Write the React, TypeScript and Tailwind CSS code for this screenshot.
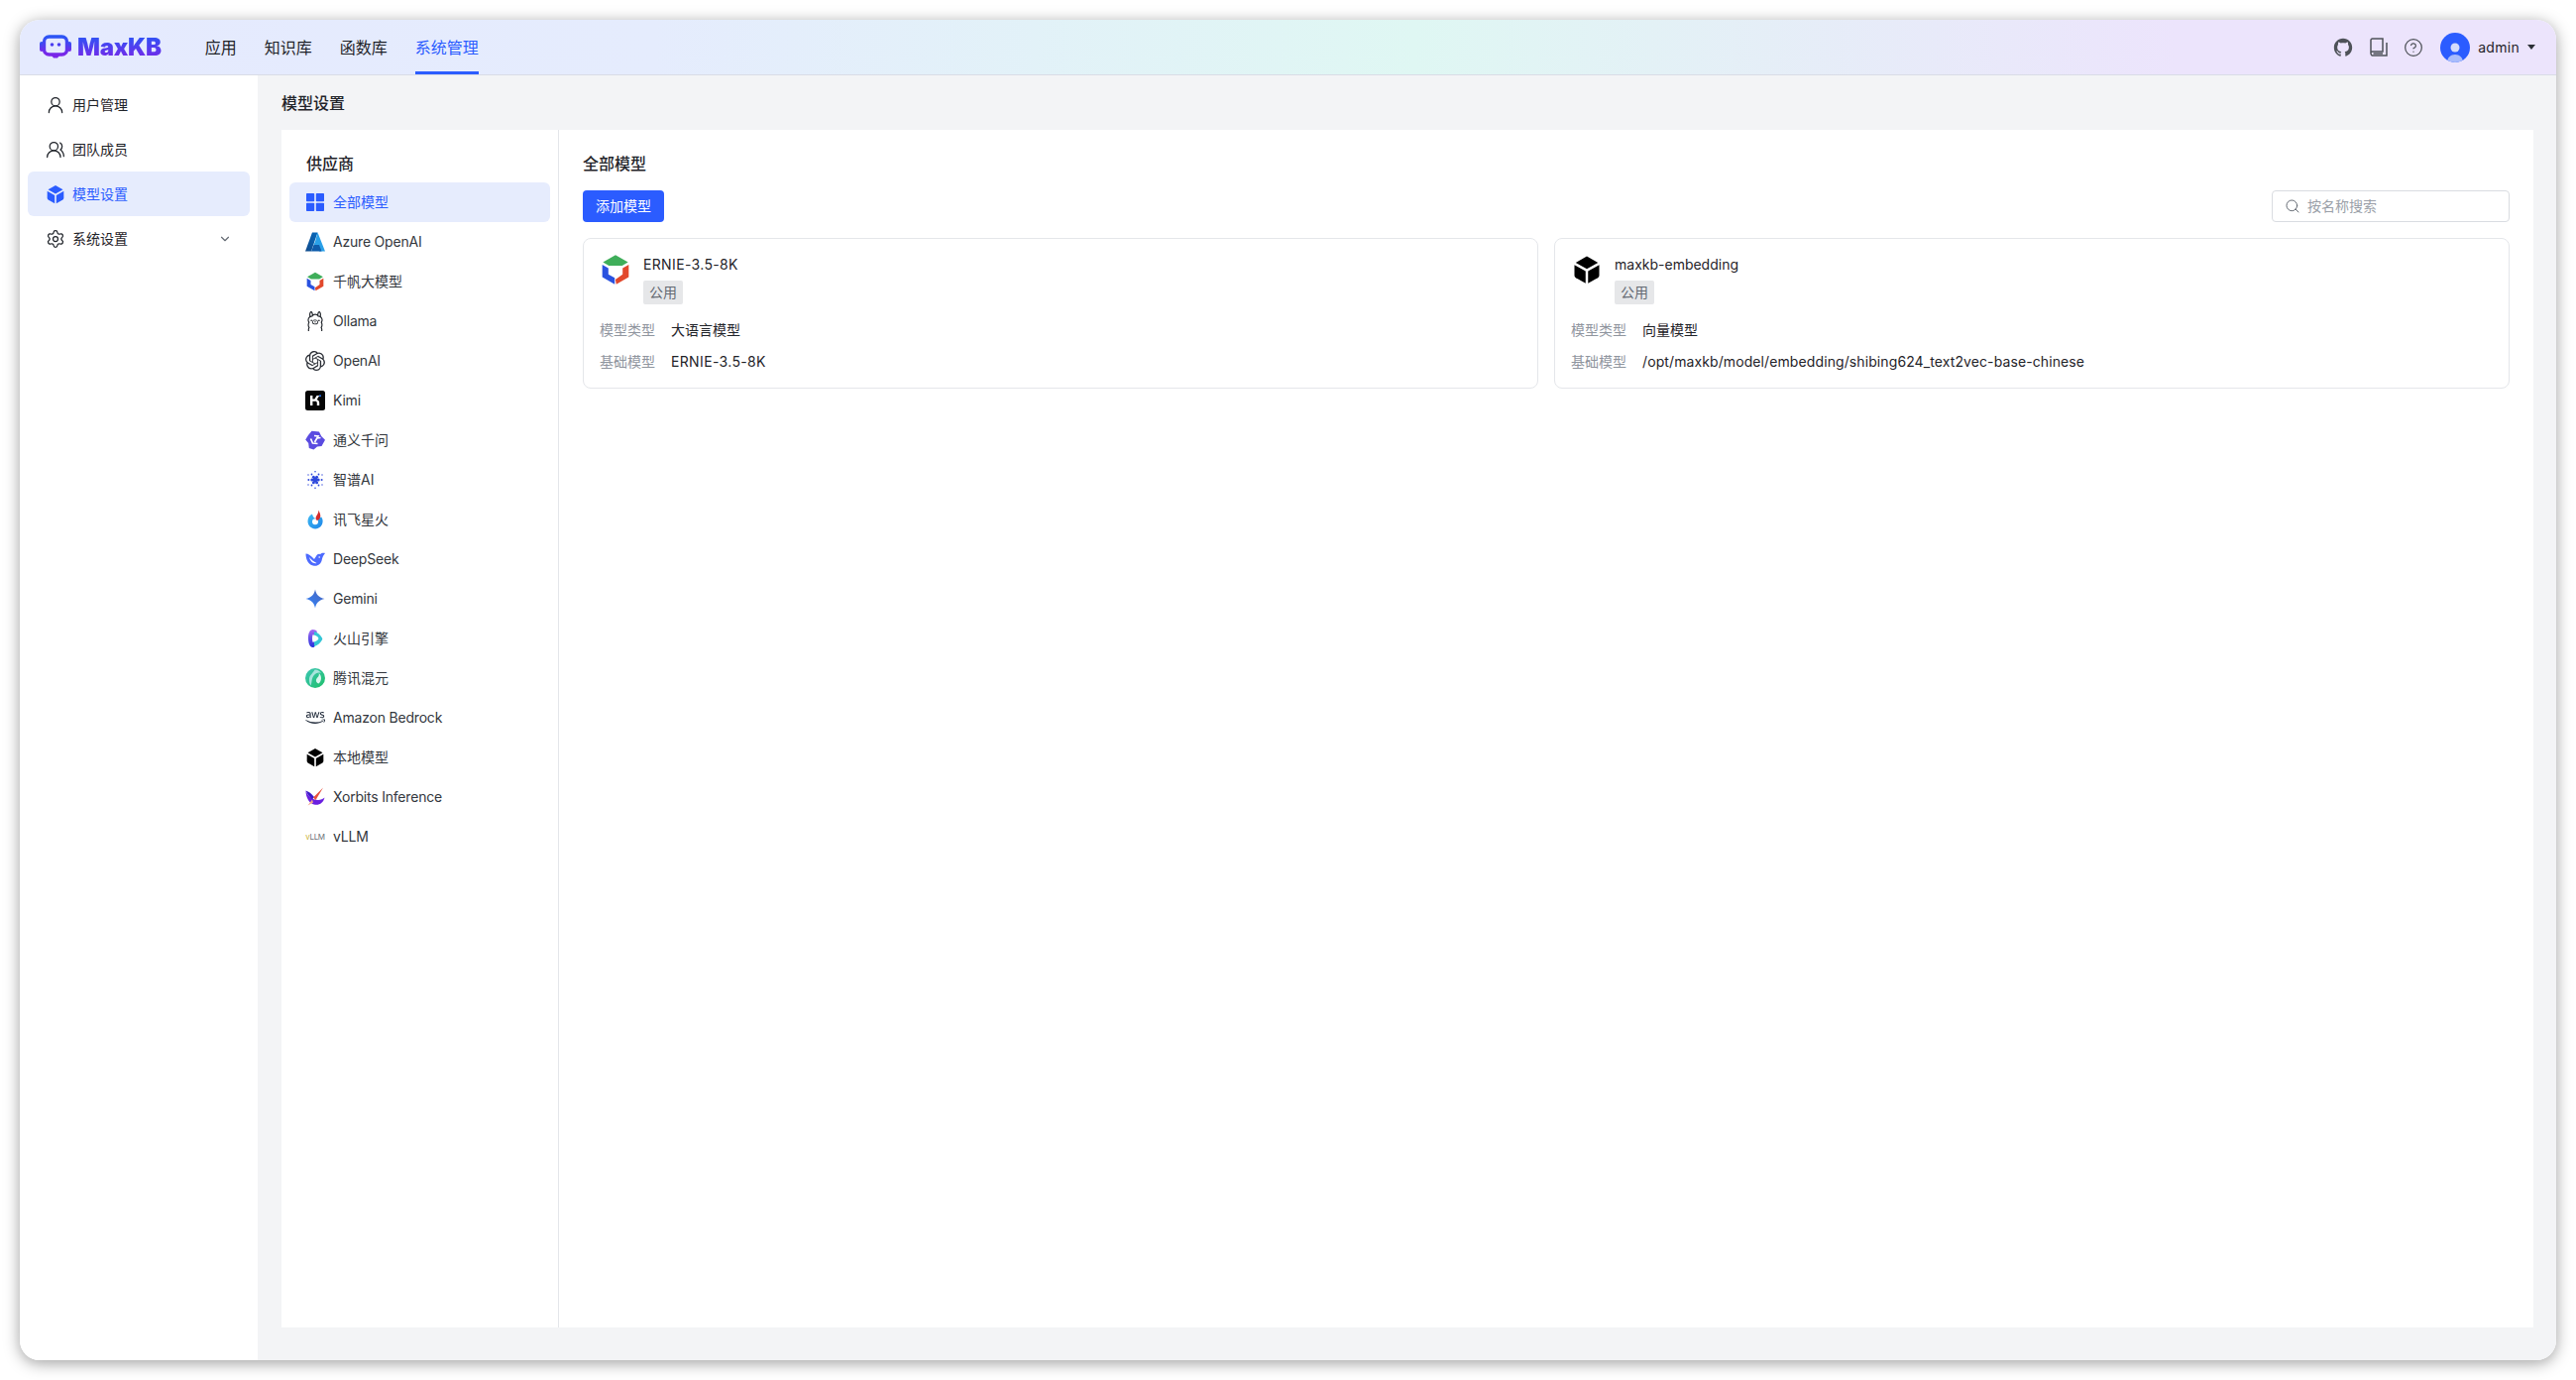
import type { ReactNode } from 'react'
import { ChevronDown, CircleHelp, Search, Settings, UserRound, UsersRound } from 'lucide-react'
import { FaAws } from 'react-icons/fa'
import { RiGithubFill } from 'react-icons/ri'
import { SiOllama, SiOpenai } from 'react-icons/si'

const FONT = 'font-[Inter,"Noto_Sans_CJK_SC",sans-serif]'

function LogoIcon() {
  return (
    <svg width="32" height="26" viewBox="0 0 32 26">
      <defs>
        <linearGradient id="logo" x1="0" y1="0" x2="0" y2="1">
          <stop offset="0" stopColor="#2b55f5" />
          <stop offset="1" stopColor="#7a26e8" />
        </linearGradient>
      </defs>
      <rect x="0" y="7" width="4" height="10" rx="2" fill="url(#logo)" />
      <rect x="28" y="7" width="4" height="10" rx="2" fill="url(#logo)" />
      <rect x="4.5" y="2" width="23" height="18" rx="5" fill="none" stroke="url(#logo)" strokeWidth="3.4" />
      <circle cx="12.5" cy="10" r="1.8" fill="#4a3df0" />
      <circle cx="19.5" cy="10" r="1.8" fill="#4a3df0" />
      <path d="M12 21h8l-2 2.500h-4z" fill="#7a26e8" />
    </svg>
  )
}

function Cube({ size = 20, color = '#000' }: { size?: number; color?: string }) {
  return (
    <svg width={size} height={size} viewBox="0 0 24 24" fill={color}>
      <path d="M12 1.200 21 6.300 12 11.300 3 6.300Z" />
      <path d="M2 8.200 11 13.200V23L3.200 18.600C2.500 18.200 2 17.500 2 16.600Z" />
      <path d="M22 8.200 13 13.200V23L20.800 18.600C21.500 18.200 22 17.500 22 16.600Z" />
    </svg>
  )
}

function Qianfan({ size = 20 }: { size?: number }) {
  return (
    <svg width={size} height={size} viewBox="0 0 24 24">
      <path d="M12 1 21.500 6.400 17 9H7L2.500 6.400Z" fill="#3fae5a" />
      <path d="M2 8.200 6.600 10.900V15.600L11.400 18.200V23L2 17.600Z" fill="#2a52e0" />
      <path d="M22 8.200V17.600L12.600 23 11.900 19.500 17.400 15.600V10.900Z" fill="#e2482c" />
    </svg>
  )
}

function GridIcon() {
  return (
    <svg width="20" height="20" viewBox="0 0 20 20" fill="#2b5cff">
      <rect x="1" y="1" width="8.200" height="8.200" rx="0.800" />
      <rect x="10.800" y="1" width="8.200" height="8.200" rx="0.800" />
      <rect x="1" y="10.800" width="8.200" height="8.200" rx="0.800" />
      <rect x="10.800" y="10.800" width="8.200" height="8.200" rx="0.800" />
    </svg>
  )
}

function Azure() {
  return (
    <svg width="20" height="20" viewBox="0 0 20 20">
      <defs>
        <linearGradient id="az" x1="0" y1="1" x2="1" y2="0">
          <stop offset="0" stopColor="#114a8b" />
          <stop offset="1" stopColor="#0669bc" />
        </linearGradient>
      </defs>
      <path d="M7 .5h5.500L6 19.500H0Z" fill="url(#az)" />
      <path d="M12.500 .5 20 19.500H14L11.500 13H8.500L10 9.500Z" fill="#2aa0e8" />
      <path d="M8.500 13h5.500l2.500 6.500H6Z" fill="#0f5cab" />
    </svg>
  )
}

function Kimi() {
  return (
    <svg width="20" height="20" viewBox="0 0 20 20">
      <rect width="20" height="20" rx="2.500" fill="#050505" />
      <path d="M5 5h2.400v3.600h2L11.600 5h2.600l-2.600 4.200c1.600.3 2.600 1.400 2.600 3V15h-2.400v-2.600c0-1-.6-1.600-1.600-1.600H7.400V15H5Z" fill="#fff" />
      <circle cx="15" cy="5.200" r="1" fill="#2b7bff" />
    </svg>
  )
}

function Tongyi() {
  return (
    <svg width="20" height="20" viewBox="0 0 20 20">
      <path d="M6.500 .8 14 1.500 16.200 6 20 9.800 16.500 16 12 16.500 8.500 19.500 3.800 18 3.200 13 .2 9.500 3 5Z" fill="#5a4be0" />
      <path d="M9 5.500 13 6l-3.500 6M5.500 8.500 7.500 13l5 .500M15.500 7.500l-3.500.5" fill="none" stroke="#fff" strokeWidth="1.700" />
    </svg>
  )
}

function Zhipu() {
  const dots: [number, number, number][] = [
    [10, 10, 2.400], [6.800, 10, 1.500], [13.200, 10, 1.500], [8.400, 7.200, 1.500], [11.600, 7.200, 1.500], [8.400, 12.800, 1.500], [11.600, 12.800, 1.500],
    [3.400, 10, 1], [16.600, 10, 1], [6.500, 4.500, 0.900], [13.500, 4.500, 0.900], [6.500, 15.500, 0.900], [13.500, 15.500, 0.900],
    [10, 1.800, 0.800], [10, 18.200, 0.800], [3, 5, 0.700], [17, 5, 0.700], [3, 15, 0.700], [17, 15, 0.700],
  ]
  return (
    <svg width="20" height="20" viewBox="0 0 20 20" fill="#2f49dc">
      {dots.map(([cx, cy, r]) => (
        <circle key={`${cx}-${cy}`} cx={cx} cy={cy} r={r} />
      ))}
    </svg>
  )
}

function Spark() {
  return (
    <svg width="20" height="20" viewBox="0 0 20 20">
      <defs>
        <linearGradient id="spk" x1="0" y1="0" x2="1" y2="1">
          <stop offset="0" stopColor="#3db8f2" />
          <stop offset="1" stopColor="#1f86e8" />
        </linearGradient>
      </defs>
      <path d="M7 4.500C4 6 2.500 8.500 2.500 11.800c0 4.200 3.400 7.600 7.600 7.600s7.500-3.400 7.500-7.600c0-1.600-.5-3-1.400-4.200l-5 1.900C9 9 7.500 7 7 4.500Z" fill="url(#spk)" />
      <circle cx="10" cy="12.200" r="3" fill="#fff" />
      <path d="M13.500 .5c.8 2.500 1.800 3.800 1.800 6 0 2.300-1.500 4-3.600 4.600-1.500-1.600-1.400-3.500-.2-5C12.600 4.500 13.400 2.800 13.500 .5Z" fill="#d62b2b" />
    </svg>
  )
}

function DeepSeek() {
  return (
    <svg width="20" height="20" viewBox="0 0 20 20">
      <path d="M.5 4.500C3 4.500 6 6.500 9 10L11 7C12 5.200 13.800 4.300 15 5.200 16.200 4 18.200 3.500 20 4c-1.500 2-2.700 4-3.200 6.500-.8 4.300-4 6.800-8 6.200C3.500 16 .5 11 .5 4.500Z" fill="#4d6bfe" />
      <path d="M4 8c2 2.500 4.500 4.500 7.500 6-3.500 1-6.500-2-7.500-6Z" fill="#fff" />
      <circle cx="14.200" cy="8" r="0.800" fill="#fff" />
    </svg>
  )
}

function Gemini() {
  return (
    <svg width="20" height="20" viewBox="0 0 20 20">
      <defs>
        <linearGradient id="gem" x1="0" y1="1" x2="1" y2="0">
          <stop offset="0" stopColor="#3186ff" />
          <stop offset="1" stopColor="#4a62b8" />
        </linearGradient>
      </defs>
      <path d="M10 .5c.8 5 3.900 8.500 9.500 9.500-5.600 1-8.700 4.500-9.500 9.500C9.200 14.500 6.100 11 .5 10 6.100 9 9.200 5.500 10 .5Z" fill="url(#gem)" />
    </svg>
  )
}

function Volcano() {
  return (
    <svg width="20" height="20" viewBox="0 0 20 20">
      <defs>
        <linearGradient id="vol" x1="0" y1="0" x2="0" y2="1">
          <stop offset="0" stopColor="#a66cf2" />
          <stop offset="1" stopColor="#2430dc" />
        </linearGradient>
      </defs>
      <path d="M7.500 1C4.800 1 3 4.500 3 9.500 3 15 4.800 19 7.500 19c1.300 0 2-.6 2.500-1.500L8 10l4-7C11 1.800 9.500 1 7.500 1Z" fill="url(#vol)" />
      <path d="M9 3c3.500 1 6.500 3.800 8 6.500.4.800.4 1.300 0 2-1.500 3-4.500 5.300-8 6.500Z" fill="#35c6d6" />
      <path d="M7.500 6.300c2.700.3 5.300 1.800 6 3.700-.7 2-3.300 3.500-6 3.700-.6-2.500-.6-5 0-7.400Z" fill="#fff" />
    </svg>
  )
}

function Hunyuan() {
  return (
    <svg width="20" height="20" viewBox="0 0 20 20">
      <defs>
        <linearGradient id="hy" x1="0" y1="0" x2="1" y2="1">
          <stop offset="0" stopColor="#3cc6b4" />
          <stop offset="1" stopColor="#1fbf6a" />
        </linearGradient>
      </defs>
      <circle cx="10" cy="10" r="10" fill="url(#hy)" />
      <path d="M5.500 17.500C7 14 6 11 8.500 7.500 10.500 4.800 13.500 4 16 5c-1.500-2.500-4-3.800-6.500-3.500C8.500 4.500 4.500 6.500 4 10.500c-.3 2.700.3 5 1.500 7Z" fill="#a8e4dd" />
      <path d="M13.500 5c1.500 3-2 4.500-2.500 6.500-.5 2 .7 3.500 2.500 4 3.200-2.500 3.500-8-.000-10.500Z" fill="#d9f6ef" />
    </svg>
  )
}

function Xorbits() {
  return (
    <svg width="20" height="20" viewBox="0 0 20 20">
      <path d="M.5 3.500c2 5.500 6.500 9.500 12.500 9.500 2.500 0 4.800-1 6.500-2.500-1 5-5 7.800-9.500 7.200C4.500 17 .5 11 .5 3.500Z" fill="#6a1fe0" />
      <path d="M.5 3.500c3 1 6 3 8.500 6.500l-2 2.500C4.500 10 2 7 .5 3.500Z" fill="#3a18c8" />
      <path d="M18 .5 8 10.500l2.500 2.500Z" fill="#e8503c" />
      <path d="M7 12.500 2.500 18.500l5.500-3Z" fill="#f3a58c" />
    </svg>
  )
}

function Vllm() {
  return (
    <span className="flex w-5 justify-center text-[8px] leading-none tracking-[-0.3px] text-[#6b7077]">
      <span className="text-[#c9b13c]">v</span>LLM
    </span>
  )
}

const providers: { name: string; icon: ReactNode; latin?: boolean }[] = [
  { name: '全部模型', icon: <GridIcon /> },
  { name: 'Azure OpenAI', icon: <Azure />, latin: true },
  { name: '千帆大模型', icon: <Qianfan /> },
  { name: 'Ollama', icon: <SiOllama size={20} color="#1f2329" />, latin: true },
  { name: 'OpenAI', icon: <SiOpenai size={20} color="#2b2f36" />, latin: true },
  { name: 'Kimi', icon: <Kimi />, latin: true },
  { name: '通义千问', icon: <Tongyi /> },
  { name: '智谱AI', icon: <Zhipu /> },
  { name: '讯飞星火', icon: <Spark /> },
  { name: 'DeepSeek', icon: <DeepSeek />, latin: true },
  { name: 'Gemini', icon: <Gemini />, latin: true },
  { name: '火山引擎', icon: <Volcano /> },
  { name: '腾讯混元', icon: <Hunyuan /> },
  { name: 'Amazon Bedrock', icon: <FaAws size={20} color="#252f3e" />, latin: true },
  { name: '本地模型', icon: <Cube /> },
  { name: 'Xorbits Inference', icon: <Xorbits />, latin: true },
  { name: 'vLLM', icon: <Vllm />, latin: true },
]

const sideItems = [
  { name: '用户管理', icon: <UserRound size={20} strokeWidth={1.5} /> },
  { name: '团队成员', icon: <UsersRound size={20} strokeWidth={1.5} /> },
  { name: '模型设置', icon: <Cube color="#2b5cff" />, active: true },
  { name: '系统设置', icon: <Settings size={20} strokeWidth={1.5} />, arrow: true },
]

interface ModelCardProps {
  icon: ReactNode
  name: string
  type: string
  base: string
  nameClass?: string
  baseClass?: string
}

function ModelCard({ icon, name, type, base, nameClass = '', baseClass = '' }: ModelCardProps) {
  return (
    <div className="h-[152px] rounded-lg border border-[#e4e6ea] bg-white px-4 pt-[15px]">
      <div className="flex">
        <div className="flex h-8 w-8 items-center justify-center">{icon}</div>
        <div className="ml-3">
          <div className={`text-sm leading-[22px] text-[#1f2329] ${nameClass}`}>{name}</div>
          <span className="mt-[5px] block h-6 w-10 rounded-[2px] bg-[#e6e7e9] text-center text-sm leading-6 text-[#646a73]">公用</span>
        </div>
      </div>
      <div className="mt-[15px] flex h-[22px] items-center text-sm">
        <span className="w-[72px] text-[#8f959e]">模型类型</span>
        <span className="text-[#1f2329]">{type}</span>
      </div>
      <div className="mt-[10px] flex h-[22px] items-center text-sm">
        <span className="w-[72px] text-[#8f959e]">基础模型</span>
        <span className={`text-[#1f2329] ${baseClass}`}>{base}</span>
      </div>
    </div>
  )
}

export default function App() {
  return (
    <div className={`${FONT} h-[1392px] bg-white p-5 antialiased`}>
      <div className="flex h-full flex-col overflow-hidden rounded-[20px] bg-white shadow-[0_3px_16px_rgba(0,0,0,0.38)]">
        {/* Header */}
        <header className="flex h-[56px] shrink-0 items-center border-b border-[#d9dce6] bg-[linear-gradient(90deg,#e5eafe_0%,#e5ecfd_25%,#dff7f3_55%,#ece4fc_85%,#ece4fc_100%)] pl-5 pr-[21px]">
          <LogoIcon />
          <span className="ml-[6px] bg-[linear-gradient(180deg,#2b55f5,#7a26e8)] bg-clip-text text-[24px] font-black leading-none tracking-[-0.3px] text-transparent">MaxKB</span>
          <nav className="ml-[44px] flex h-full gap-7 text-base text-[#1f2329]">
            <a className="flex items-center">应用</a>
            <a className="flex items-center">知识库</a>
            <a className="flex items-center">函数库</a>
            <a className="flex items-center border-b-[3px] border-[#2b5cff] pt-[3px] text-[#2b5cff]">系统管理</a>
          </nav>
          <div className="ml-auto flex items-center text-[#4e5258]">
            <RiGithubFill size={22} />
            <svg className="ml-[14px]" width="22" height="22" viewBox="0 0 22 22" fill="none" stroke="currentColor" strokeWidth="1.500">
              <path d="M3 17V3.500C3 2.700 3.700 2 4.500 2H15v13H4.500C3.700 15 3 15.700 3 16.500S3.700 19 4.500 19H19V6" />
              <path d="M5.500 17H15" />
            </svg>
            <CircleHelp className="ml-[14px]" size={20} strokeWidth={1.5} />
            <div className="ml-[17px] flex h-[30px] w-[30px] items-end justify-center overflow-hidden rounded-full bg-[#2b5cff]">
              <svg width="20" height="24" viewBox="0 0 20 24">
                <circle cx="10" cy="9" r="4.500" fill="#d4dcfb" />
                <path d="M2 24c0-5 3.500-8 8-8s8 3 8 8Z" fill="#a9bcfb" />
              </svg>
            </div>
            <span className="ml-2 text-sm tracking-[0.3px] text-[#1f2329]">admin</span>
            <span className="ml-2 h-0 w-0 border-x-[4px] border-t-[5px] border-x-transparent border-t-[#2b2f36]" />
          </div>
        </header>

        <div className="flex min-h-0 flex-1">
          {/* Sidebar */}
          <aside className="w-[240px] shrink-0 bg-white px-2 pt-[7px]">
            {sideItems.map((item) => (
              <div
                key={item.name}
                className={`flex h-[45px] items-center rounded-md pl-[18px] pr-[18px] text-sm ${item.active ? 'bg-[#e6ecfd] text-[#2b5cff]' : 'text-[#1f2329]'}`}
              >
                <span className="flex w-5 justify-center">{item.icon}</span>
                <span className="ml-[7px]">{item.name}</span>
                {item.arrow && <ChevronDown className="ml-auto text-[#646a73]" size={14} />}
              </div>
            ))}
          </aside>

          {/* Main */}
          <main className="flex min-w-0 flex-1 flex-col bg-[#f3f4f6] pb-[33px] pl-[24px] pr-[23px]">
            <h2 className="flex h-[55px] shrink-0 items-center text-base font-medium text-[#1f2329]">模型设置</h2>
            <div className="flex min-h-0 flex-1 bg-white">
              <div className="w-[280px] shrink-0 border-r border-[#e4e6ea] px-2 pt-6">
                <h3 className="pl-[17px] text-base font-medium leading-5 text-[#1f2329]">供应商</h3>
                <ul className="mt-[9px]">
                  {providers.map((p, i) => (
                    <li
                      key={p.name}
                      className={`flex h-10 items-center rounded-md pl-4 text-sm ${i === 0 ? 'bg-[#e6ecfd] text-[#2b5cff]' : 'text-[#33373d]'}`}
                    >
                      <span className="flex w-5 items-center justify-center">{p.icon}</span>
                      <span className={p.latin ? 'ml-2 tracking-[-0.2px]' : 'ml-2'}>{p.name}</span>
                    </li>
                  ))}
                </ul>
              </div>

              <div className="min-w-0 flex-1 px-6 pt-6">
                <h3 className="text-base font-medium leading-5 text-[#1f2329]">全部模型</h3>
                <div className="mt-[17px] flex items-center justify-between">
                  <button className="h-8 w-[82px] rounded bg-[#2b5cff] text-sm text-white">添加模型</button>
                  <div className="flex h-8 w-[240px] items-center rounded border border-[#d9dce1] px-3 text-sm text-[#9a9fa8]">
                    <Search size={16} strokeWidth={1.5} className="text-[#646a73]" />
                    <span className="ml-[7px]">按名称搜索</span>
                  </div>
                </div>
                <div className="mt-4 grid grid-cols-2 gap-4">
                  <ModelCard icon={<Qianfan size={32} />} name="ERNIE-3.5-8K" type="大语言模型" base="ERNIE-3.5-8K" nameClass="tracking-[0.35px]" baseClass="tracking-[0.35px]" />
                  <ModelCard icon={<Cube size={30} />} name="maxkb-embedding" type="向量模型" base="/opt/maxkb/model/embedding/shibing624_text2vec-base-chinese" baseClass="tracking-[0.1px]" />
                </div>
              </div>
            </div>
          </main>
        </div>
      </div>
    </div>
  )
}
